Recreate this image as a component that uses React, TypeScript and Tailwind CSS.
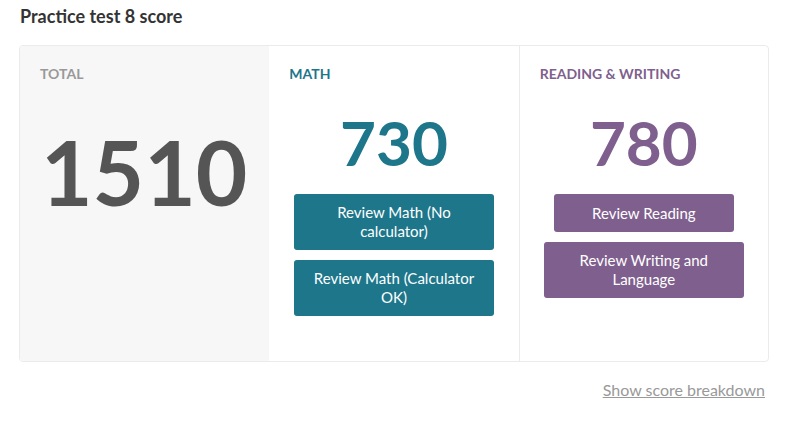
const MATH = '#1e768b'
const RW = '#7f5f8e'

export default function App() {
  return (
    <div className="w-[792px] h-[430px] bg-white" style={{ fontFamily: 'Lato, "Open Sans", sans-serif' }}>
      <div className="pl-[20px] pr-[23px] pt-[5px]">
        <h1 className="text-[18px] leading-[22px] font-bold text-[#333]">Practice test 8 score</h1>
        <div className="mt-[18px] ml-[-1px] grid grid-cols-3 border border-[#ebebeb] rounded-[4px] h-[317px] overflow-hidden">
          <div className="bg-[#f7f7f7] pl-[20px] pt-[19px]">
            <div className="text-[14px] leading-[17px] font-bold text-[#999]">TOTAL</div>
            <div className="mt-[35px] ml-[1px] text-[89px] leading-[110px] font-bold text-[#555]">1510</div>
          </div>
          <div className="pl-[20px] pr-[20px] pt-[19px] flex flex-col">
            <div className="text-[14px] leading-[17px] font-bold" style={{ color: MATH }}>MATH</div>
            <div className="mt-[23px] text-center text-[62px] leading-[74px] font-bold" style={{ color: MATH }}>730</div>
            <div className="mt-[15px] flex flex-col items-center gap-[10px]">
              <button className="w-[200px] h-[56px] rounded-[3px] text-white text-[15px] leading-[19px] px-[10px]" style={{ backgroundColor: MATH }}>
                Review Math (No calculator)
              </button>
              <button className="w-[200px] h-[56px] rounded-[3px] text-white text-[15px] leading-[19px] px-[10px]" style={{ backgroundColor: MATH }}>
                Review Math (Calculator OK)
              </button>
            </div>
          </div>
          <div className="border-l border-[#ebebeb] pl-[20px] pr-[20px] pt-[19px] flex flex-col">
            <div className="text-[14px] leading-[17px] font-bold" style={{ color: RW }}>READING &amp; WRITING</div>
            <div className="mt-[23px] text-center text-[62px] leading-[74px] font-bold" style={{ color: RW }}>780</div>
            <div className="mt-[15px] flex flex-col items-center gap-[10px]">
              <button className="w-[180px] h-[38px] rounded-[3px] text-white text-[15px] leading-[19px] px-[10px]" style={{ backgroundColor: RW }}>
                Review Reading
              </button>
              <button className="w-[200px] h-[56px] rounded-[3px] text-white text-[15px] leading-[19px] px-[10px]" style={{ backgroundColor: RW }}>
                Review Writing and Language
              </button>
            </div>
          </div>
        </div>
        <div className="mt-[18px] flex justify-end pr-[4px]">
          <a className="text-[16px] leading-[20px] text-[#999] underline cursor-pointer">Show score breakdown</a>
        </div>
      </div>
    </div>
  )
}
